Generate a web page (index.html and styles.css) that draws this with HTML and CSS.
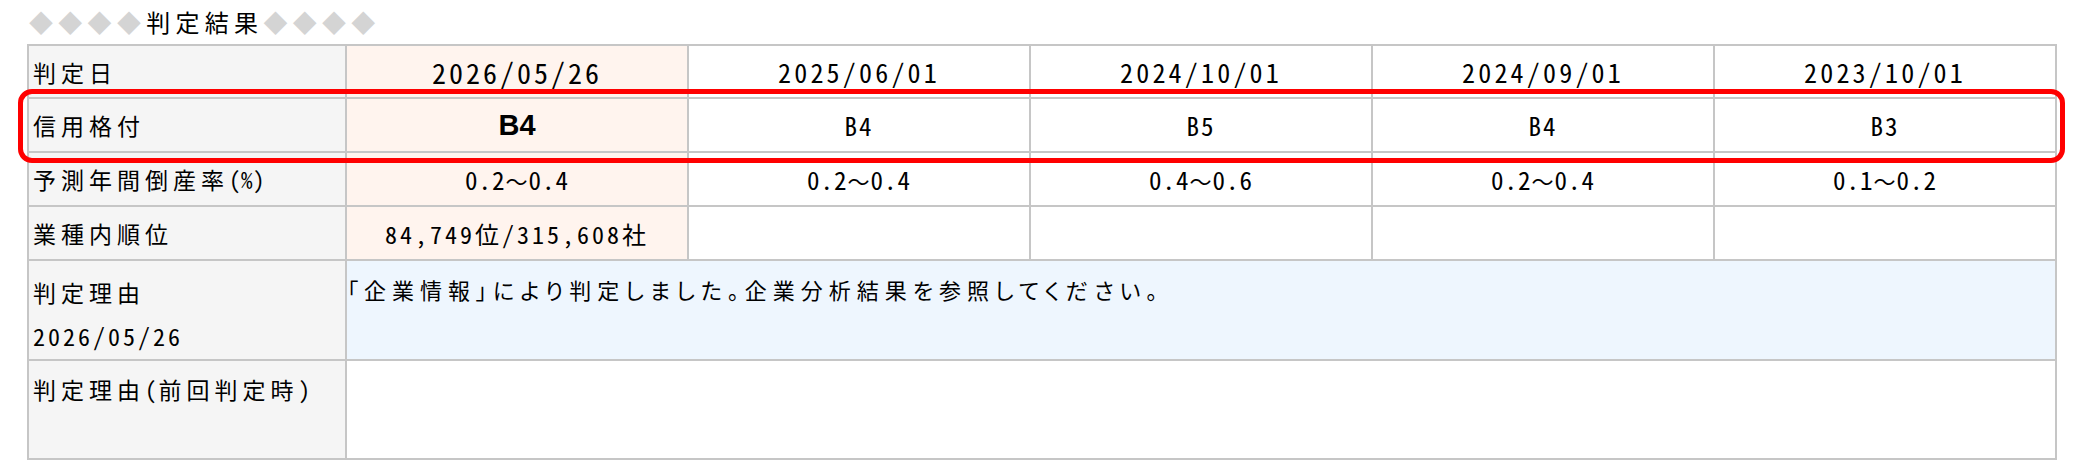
FILE: index.html
```html
<!DOCTYPE html>
<html lang="ja">
<head>
<meta charset="utf-8">
<title>判定結果</title>
<link rel="stylesheet" href="styles.css">
</head>
<body>
<div class="page">
  <div class="title"><span class="dia">◆◆◆◆</span>判定結果<span class="dia">◆◆◆◆</span></div>
  <div class="table-wrap">
    <table class="result">
      <colgroup>
        <col class="c-label">
        <col class="c-val">
        <col class="c-val">
        <col class="c-val">
        <col class="c-val">
        <col class="c-val">
      </colgroup>
      <tr class="r-std r-first">
        <th class="label">判定日</th>
        <td class="cur date-big">2026/05/26</td>
        <td class="val date">2025/06/01</td>
        <td class="val date">2024/10/01</td>
        <td class="val date">2024/09/01</td>
        <td class="val date">2023/10/01</td>
      </tr>
      <tr class="r-std">
        <th class="label">信用格付</th>
        <td class="cur grade-big">B4</td>
        <td class="val grade">B4</td>
        <td class="val grade">B5</td>
        <td class="val grade">B4</td>
        <td class="val grade">B3</td>
      </tr>
      <tr class="r-std">
        <th class="label">予測年間倒産率<span class="pct">(%)</span></th>
        <td class="cur val range">0.2<span class="wave">～</span>0.4</td>
        <td class="val range">0.2<span class="wave">～</span>0.4</td>
        <td class="val range">0.4<span class="wave">～</span>0.6</td>
        <td class="val range">0.2<span class="wave">～</span>0.4</td>
        <td class="val range">0.1<span class="wave">～</span>0.2</td>
      </tr>
      <tr class="r-std">
        <th class="label">業種内順位</th>
        <td class="cur val rank">84,749位/315,608社</td>
        <td class="val"></td>
        <td class="val"></td>
        <td class="val"></td>
        <td class="val"></td>
      </tr>
      <tr class="r-reason">
        <th class="label label-top">判定理由<br><span class="num">2026/05/26</span></th>
        <td class="reason" colspan="5">「企業情報」により判定しました。企業分析結果を参照してください。</td>
      </tr>
      <tr class="r-prev">
        <th class="label label-top label-prev">判定理由<span class="paren">(</span>前回判定時<span class="paren">)</span></th>
        <td class="prev" colspan="5"></td>
      </tr>
    </table>
    <div class="highlight"></div>
  </div>
</div>
</body>
</html>
```

FILE: styles.css
```css
html, body {
  margin: 0;
  padding: 0;
  background: #ffffff;
}

body {
  font-family: "Noto Sans CJK JP", "Noto Sans", sans-serif;
  color: #000000;
  font-feature-settings: "hwid" 1;
}

.page {
  width: 2085px;
  height: 472px;
  overflow: hidden;
}

.title {
  height: 44px;
  padding-left: 29px;
  font-size: 24px;
  line-height: 44px;
  letter-spacing: 5.3px;
  box-sizing: border-box;
}

.dia {
  color: #d4d4d4;
  letter-spacing: 5.3px;
}

.table-wrap {
  position: relative;
  margin-left: 27px;
  width: 2030px;
}

.result {
  border-collapse: collapse;
  table-layout: fixed;
  width: 2030px;
}

.c-label { width: 318px; }
.c-val { width: 342px; }

.result th,
.result td {
  border: 2px solid #c6c6c6;
  padding: 0;
  font-weight: normal;
}

.r-std { height: 54px; }
.r-first { height: 53px; }
.r-reason { height: 100px; }
.r-prev { height: 99px; }

.label {
  background: #f5f5f5;
  text-align: left;
  padding-left: 4px !important;
  font-size: 23px;
  letter-spacing: 5px;
  vertical-align: middle;
}

.pct {
  letter-spacing: 0.5px;
  font-size: 23px;
}

.label-top {
  vertical-align: top;
  padding-top: 9px !important;
  line-height: 44px;
}

.label-prev {
  padding-top: 6px !important;
}

.paren {
  letter-spacing: 2px;
}

.num {
  font-size: 24px;
  letter-spacing: 3px;
}

.val {
  text-align: center;
  font-size: 25px;
  vertical-align: middle;
}

.result .date { font-size: 26px; letter-spacing: 3.2px; }
.grade { letter-spacing: 2px; }
.range { letter-spacing: 1px; }
.rank { letter-spacing: 3px; font-size: 24px; }

.wave {
  font-feature-settings: normal;
  font-size: 22px;
}

.cur {
  background: #fff4ee;
}

.result .date-big {
  text-align: center;
  font-size: 28px;
  letter-spacing: 3px;
}

.result .grade-big {
  text-align: center;
  font-family: "Liberation Sans", Arial, sans-serif;
  font-weight: bold;
  font-size: 29px;
}

.reason {
  background: #eef6fe;
  vertical-align: top;
  padding: 12px 0 0 0 !important;
  font-size: 22px;
  letter-spacing: 6px;
  line-height: 32px;
  font-feature-settings: "palt" 1;
}

.prev {
  background: #ffffff;
}

.highlight {
  position: absolute;
  left: -9px;
  top: 45px;
  width: 2047px;
  height: 74px;
  border: 5px solid #ff0000;
  border-radius: 14px;
  box-sizing: border-box;
  pointer-events: none;
}
```
